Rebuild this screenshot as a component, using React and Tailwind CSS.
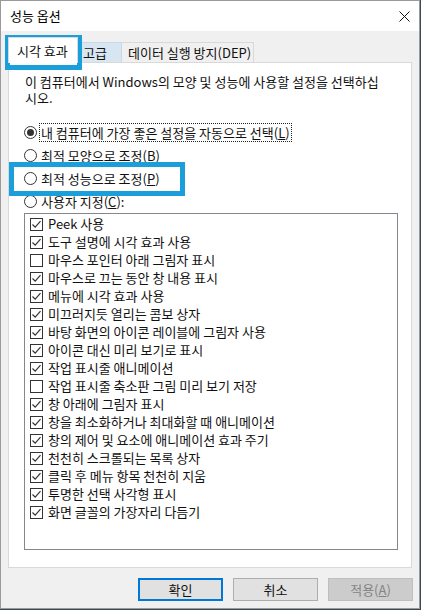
const FONT = { fontFamily: '"Noto Sans CJK KR", "Noto Sans", sans-serif' }

const ITEMS = [
  ['Peek 사용', true],
  ['도구 설명에 시각 효과 사용', true],
  ['마우스 포인터 아래 그림자 표시', false],
  ['마우스로 끄는 동안 창 내용 표시', true],
  ['메뉴에 시각 효과 사용', true],
  ['미끄러지듯 열리는 콤보 상자', true],
  ['바탕 화면의 아이콘 레이블에 그림자 사용', true],
  ['아이콘 대신 미리 보기로 표시', true],
  ['작업 표시줄 애니메이션', true],
  ['작업 표시줄 축소판 그림 미리 보기 저장', false],
  ['창 아래에 그림자 표시', true],
  ['창을 최소화하거나 최대화할 때 애니메이션', true],
  ['창의 제어 및 요소에 애니메이션 효과 주기', true],
  ['천천히 스크롤되는 목록 상자', true],
  ['클릭 후 메뉴 항목 천천히 지움', true],
  ['투명한 선택 사각형 표시', true],
  ['화면 글꼴의 가장자리 다듬기', true],
]

function Radio({ checked }) {
  return (
    <span className="w-[13px] h-[13px] rounded-full border border-[#333] bg-white flex items-center justify-center shrink-0">
      {checked && <span className="w-[7px] h-[7px] rounded-full bg-[#333]" />}
    </span>
  )
}

function Check({ checked }) {
  return (
    <span className="w-[13px] h-[13px] border border-[#333] bg-white shrink-0 flex items-center justify-center">
      {checked && (
        <svg width="11" height="11" viewBox="0 0 11 11">
          <path d="M1.5 5.5 L4.2 8.2 L9.5 2.2" fill="none" stroke="#333" strokeWidth="1.2" />
        </svg>
      )}
    </span>
  )
}

function RadioRow({ checked, children, focus }) {
  return (
    <div className="h-[23px] flex items-center">
      <Radio checked={checked} />
      <span className={'ml-[3px] px-[1px] leading-[17px] ' + (focus ? 'outline outline-1 outline-dotted outline-[#222]' : '')}>
        {children}
      </span>
    </div>
  )
}

export default function App() {
  return (
    <div className="w-[421px] h-[610px] relative overflow-hidden bg-[#3a4a5a] text-[13px] text-[#111]" style={FONT}>
      <div className="w-[420px] h-[609px] bg-[#f0f0f0] border border-[#9a9a9a] flex flex-col">
        <div className="h-[30px] bg-white flex items-center justify-between pl-[9px] pr-[9px]">
          <span className="text-[13px] text-black">성능 옵션</span>
          <svg width="11" height="11" viewBox="0 0 11 11">
            <path d="M0.5 0.5 L10.5 10.5 M10.5 0.5 L0.5 10.5" stroke="#111" strokeWidth="1" />
          </svg>
        </div>

        <div className="pl-[7px] pt-[5px] flex items-end h-[31px]">
          <div className="h-[26px] w-[70px] bg-white border border-[#d9d9d9] border-b-0 flex items-center pl-[8px] relative z-10 -mb-[1px]">
            시각 효과
          </div>
          <div className="h-[20px] w-[44px] bg-[#d8e6f2] border border-[#c5d9ea] border-l-0 border-b-0 flex items-center pl-[5px]">
            고급
          </div>
          <div className="h-[20px] w-[132px] bg-[#f0f0f0] border border-[#d9d9d9] border-l-0 border-b-0 flex items-center pl-[6px]">
            데이터 실행 방지(DEP)
          </div>
        </div>

        <div className="ml-[7px] w-[404px] h-[506px] bg-white border border-[#d9d9d9] flex flex-col pl-[16px] pt-[11px]">
          <p className="leading-[16px] w-[365px]">이 컴퓨터에서 Windows의 모양 및 성능에 사용할 설정을 선택하십시오.</p>

          <div className="mt-[15px] flex flex-col -ml-[1px]">
            <RadioRow checked focus>
              내 컴퓨터에 가장 좋은 설정을 자동으로 선택(<span className="underline">L</span>)
            </RadioRow>
            <RadioRow>
              최적 모양으로 조정(<span className="underline">B</span>)
            </RadioRow>
            <RadioRow>
              최적 성능으로 조정(<span className="underline">P</span>)
            </RadioRow>
            <RadioRow>
              사용자 지정(<span className="underline">C</span>):
            </RadioRow>
          </div>

          <div className="-ml-[1px] w-[374px] h-[337px] border border-[#828790] pt-[1px] pl-[5px] flex flex-col">
            {ITEMS.map(([label, on], i) => (
              <div key={i} className="h-[18px] flex items-center gap-[5px]">
                <Check checked={on} />
                <span className="leading-[16px]">{label}</span>
              </div>
            ))}
          </div>
        </div>

        <div className="mt-[10px] flex justify-end gap-[10px] pr-[6px]">
          <button className="w-[85px] h-[23px] bg-[#e1e1e1] border-2 border-[#0078d7] flex items-center justify-center">확인</button>
          <button className="w-[85px] h-[23px] bg-[#e1e1e1] border border-[#adadad] flex items-center justify-center">취소</button>
          <button className="w-[85px] h-[23px] bg-[#cccccc] border border-[#bfbfbf] text-[#838383] flex items-center justify-center">
            적용(<span className="underline">A</span>)
          </button>
        </div>
      </div>

      <div className="absolute left-[5px] top-[35px] w-[77px] h-[35px] border-[5px] border-[#1a9fdb]" />
      <div className="absolute left-[9px] top-[162px] w-[176px] h-[34px] border-[5px] border-[#1a9fdb]" />
    </div>
  )
}
